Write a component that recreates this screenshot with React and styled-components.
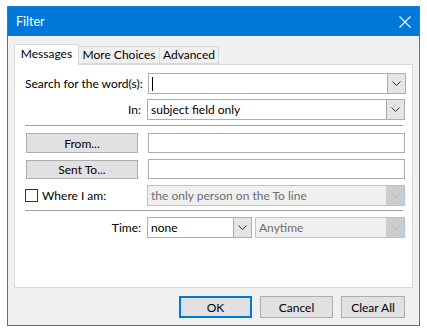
import React from "react";
import styled, { createGlobalStyle } from "styled-components";

const Global = createGlobalStyle`
  body {
    margin: 0;
    background: #ffffff;
    font-family: "Segoe UI", Lato, "Noto Sans", sans-serif;
    font-size: 12px;
    color: #000;
  }
`;

const Window = styled.div`
  margin: 6px 0 0 7px;
  width: 413px;
  height: 320px;
  box-sizing: border-box;
  border: 1px solid #1883d7;
  background: #f0f0f0;
  display: flex;
  flex-direction: column;
`;

const TitleBar = styled.div`
  height: 29px;
  background: #0078d7;
  color: #fff;
  display: flex;
  align-items: center;
  justify-content: space-between;
  padding: 0 8px 0 8px;
`;

const Title = styled.span`
  margin-top: -1px;
  font-size: 12.5px;
`;

const Body = styled.div`
  padding: 8px 6px 0 6px;
  display: flex;
  flex-direction: column;
`;

const TabStrip = styled.div`
  display: flex;
  align-items: flex-end;
  height: 20px;
  position: relative;
  z-index: 1;
`;

const Tab = styled.div`
  box-sizing: border-box;
  width: ${(p) => p.$w}px;
  height: ${(p) => (p.$active ? "21px" : "18px")};
  margin-bottom: ${(p) => (p.$active ? "-1px" : "0")};
  border: 1px solid #d9d9d9;
  border-bottom: ${(p) => (p.$active ? "none" : "1px solid #d9d9d9")};
  border-left: ${(p) => (p.$first || p.$active ? "1px solid #d9d9d9" : "none")};
  background: ${(p) => (p.$active ? "#fff" : "#f0f0f0")};
  display: flex;
  align-items: center;
  justify-content: center;
  padding-bottom: ${(p) => (p.$active ? "2px" : "0")};
  line-height: 1;
  white-space: nowrap;
`;

const Panel = styled.div`
  box-sizing: border-box;
  width: 399px;
  height: 224px;
  background: #fff;
  border: 1px solid #d9d9d9;
  padding: 8px 7px 0 10px;
  display: flex;
  flex-direction: column;
`;

const Row = styled.div`
  display: flex;
  align-items: center;
  height: ${(p) => p.$h || 21}px;
  margin-top: ${(p) => p.$mt || 0}px;
`;

const Label = styled.div`
  width: 117px;
  margin-right: 6px;
  text-align: right;
  white-space: nowrap;
`;

const Separator = styled.div`
  height: 1px;
  background: #a0a0a0;
  margin: ${(p) => p.$m};
  width: 378px;
`;

const Combo = styled.div`
  box-sizing: border-box;
  height: 21px;
  width: ${(p) => p.$w || 258}px;
  border: 1px solid ${(p) => (p.$disabled ? "#a9c7e8" : "#adadad")};
  background: ${(p) => (p.$disabled ? "#f0f0f0" : "#fff")};
  color: ${(p) => (p.$disabled ? "#6d6d6d" : "#000")};
  display: flex;
  align-items: center;
  padding: 0 0 0 3px;
  flex: none;
`;

const ComboText = styled.span`
  flex: 1;
  white-space: nowrap;
  overflow: hidden;
`;

const Caret = styled.span`
  width: 1px;
  height: 14px;
  background: #000;
`;

const DropBtn = styled.div`
  box-sizing: border-box;
  width: 18px;
  background: ${(p) => (p.$disabled ? "#cccccc" : "#e5e5e5")};
  border-left: 1px solid ${(p) => (p.$disabled ? "#cccccc" : "#acacac")};
  display: flex;
  align-items: center;
  justify-content: center;
  align-self: stretch;
`;

const TextBox = styled.div`
  box-sizing: border-box;
  width: 258px;
  height: 20px;
  border: 1px solid #adadad;
  background: #fff;
`;

const PushButton = styled.div`
  box-sizing: border-box;
  width: ${(p) => p.$w || 112}px;
  height: ${(p) => p.$h || 20}px;
  background: #e1e1e1;
  border: ${(p) => (p.$default ? "2px solid #0078d7" : "1px solid #adadad")};
  display: flex;
  align-items: center;
  justify-content: center;
  white-space: nowrap;
`;

const ButtonCell = styled.div`
  width: 123px;
  padding-left: 1px;
  box-sizing: border-box;
`;

const CheckLabel = styled.label`
  width: 123px;
  display: flex;
  align-items: center;
  gap: 4px;
  white-space: nowrap;
`;

const CheckBox = styled.span`
  box-sizing: border-box;
  width: 13px;
  height: 13px;
  border: 1px solid #333;
  background: #fff;
  flex: none;
`;

const Spacer = styled.span`
  width: 3px;
  flex: none;
`;

const Footer = styled.div`
  display: flex;
  justify-content: flex-end;
  gap: 8px;
  padding: 8px 8px 0 0;
`;

const Chevron = ({ color = "#333" }) => (
  <svg width="9" height="5" viewBox="0 0 9 5">
    <path d="M0.5 0.5 L4.5 4.5 L8.5 0.5" fill="none" stroke={color} strokeWidth="1" />
  </svg>
);

const Close = () => (
  <svg width="12" height="12" viewBox="0 0 12 12">
    <path d="M0.5 0.5 L11.5 11.5 M11.5 0.5 L0.5 11.5" stroke="#fff" strokeWidth="1.1" />
  </svg>
);

const DropCombo = ({ text, width, disabled, caret }) => (
  <Combo $w={width} $disabled={disabled}>
    {caret ? <Caret /> : null}
    <ComboText>{text}</ComboText>
    <DropBtn $disabled={disabled}>
      <Chevron color={disabled ? "#b0b0b0" : "#333"} />
    </DropBtn>
  </Combo>
);

export default function App() {
  return (
    <>
      <Global />
      <Window>
        <TitleBar>
          <Title>Filter</Title>
          <Close />
        </TitleBar>
        <Body>
          <TabStrip>
            <Tab $active $first $w={65}>Messages</Tab>
            <Tab $w={81}>More Choices</Tab>
            <Tab $w={59}>Advanced</Tab>
          </TabStrip>
          <Panel>
            <Row>
              <Label>Search for the word(s):</Label>
              <DropCombo caret text="" />
            </Row>
            <Row $mt={5}>
              <Label>In:</Label>
              <DropCombo text="subject field only" />
            </Row>
            <Separator $m="5px 0 0 0" />
            <Row $h={20} $mt={7}>
              <ButtonCell>
                <PushButton>From...</PushButton>
              </ButtonCell>
              <TextBox />
            </Row>
            <Row $h={20} $mt={6}>
              <ButtonCell>
                <PushButton $h={19}>Sent To...</PushButton>
              </ButtonCell>
              <TextBox />
            </Row>
            <Row $mt={6}>
              <CheckLabel>
                <CheckBox />
                Where I am:
              </CheckLabel>
              <DropCombo disabled text="the only person on the To line" />
            </Row>
            <Separator $m="4px 0 0 0" />
            <Row $h={20} $mt={6}>
              <Label>Time:</Label>
              <DropCombo text="none" width={105} />
              <Spacer />
              <DropCombo disabled text="Anytime" width={150} />
            </Row>
          </Panel>
          <Footer>
            <PushButton $default $w={73} $h={22}>OK</PushButton>
            <PushButton $w={73} $h={22}>Cancel</PushButton>
            <PushButton $w={64} $h={22}>Clear All</PushButton>
          </Footer>
        </Body>
      </Window>
    </>
  );
}
